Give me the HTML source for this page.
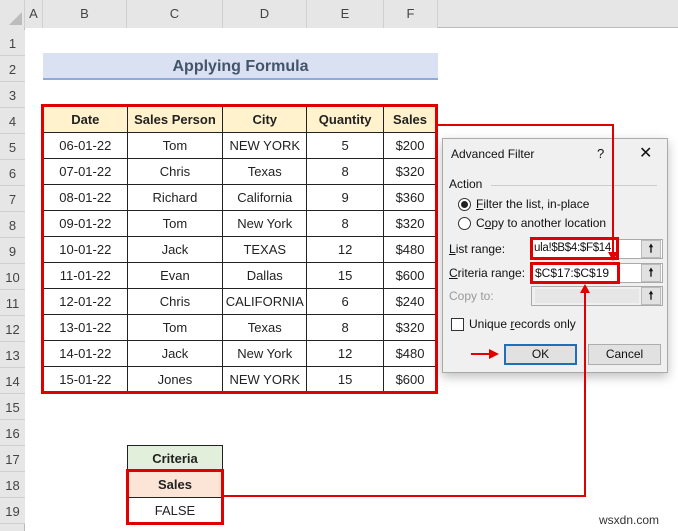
<!DOCTYPE html>
<html><head><style>
*{margin:0;padding:0;box-sizing:border-box}
body{width:678px;height:531px;background:#fff;position:relative;overflow:hidden;font-family:"Liberation Sans",sans-serif;font-size:13px;color:#222}
.a{position:absolute}
.ch{position:absolute;top:0;height:28px;line-height:28px;border-right:1px solid #cfcfcf;text-align:center;background:#e6e6e6;color:#444}
.rh{position:absolute;left:0;width:25px;height:26px;line-height:28px;text-align:center;border-bottom:1px solid #cfcfcf;background:#e6e6e6;color:#444;font-size:13px}
table{border-collapse:collapse;position:absolute}
td{border:1px solid #222;text-align:center;height:26px;padding:0;font-size:13px}
.red{position:absolute;border:3px solid #e00000}
.ln{position:absolute;background:#e00000}
.dlg{position:absolute;left:442px;top:138px;width:226px;height:235px;background:#f0f0f0;border:1px solid #aaa;box-shadow:0 4px 10px rgba(0,0,0,.25);font-size:12px;color:#111}
.inp{position:absolute;background:#fff;border:1px solid #aaa;height:20px}
.btn{position:absolute;width:20px;height:18px;background:#e1e1e1;border:1px solid #bbb;text-align:center;font-size:11px;line-height:16px;font-weight:bold}
</style></head><body>
<div class="a" style="left:0;top:0;width:678px;height:28px;background:#e6e6e6;border-bottom:1px solid #bbb"></div>
<div class="a" style="left:0;top:0;width:25px;height:28px;background:#e6e6e6;border-right:1px solid #cfcfcf"></div>
<div class="a" style="left:9px;top:12px;width:0;height:0;border-left:13px solid transparent;border-bottom:13px solid #bcbcbc"></div>
<div class="ch" style="left:25px;width:18px">A</div>
<div class="ch" style="left:43px;width:84px">B</div>
<div class="ch" style="left:127px;width:96px">C</div>
<div class="ch" style="left:223px;width:84px">D</div>
<div class="ch" style="left:307px;width:77px">E</div>
<div class="ch" style="left:384px;width:54px">F</div>
<div class="a" style="left:0;top:28px;width:25px;height:503px;background:#e6e6e6;border-right:1px solid #bbb"></div>
<div class="rh" style="top:30px">1</div><div class="rh" style="top:56px">2</div><div class="rh" style="top:82px">3</div><div class="rh" style="top:108px">4</div><div class="rh" style="top:134px">5</div><div class="rh" style="top:160px">6</div><div class="rh" style="top:186px">7</div><div class="rh" style="top:212px">8</div><div class="rh" style="top:238px">9</div><div class="rh" style="top:264px">10</div><div class="rh" style="top:290px">11</div><div class="rh" style="top:316px">12</div><div class="rh" style="top:342px">13</div><div class="rh" style="top:368px">14</div><div class="rh" style="top:394px">15</div><div class="rh" style="top:420px">16</div><div class="rh" style="top:446px">17</div><div class="rh" style="top:472px">18</div><div class="rh" style="top:498px">19</div>

<div class="a" style="left:43px;top:53px;width:395px;height:27px;background:#d9e1f2;border-bottom:2px solid #8ea9db;text-align:center;line-height:27px;font-weight:bold;font-size:16px;color:#44546a">Applying Formula</div>

<table style="left:43px;top:106px;width:394px">
<tr style="background:#fff2cc"><td style="width:84px;font-weight:bold">Date</td><td style="width:96px;font-weight:bold">Sales Person</td><td style="width:84px;font-weight:bold">City</td><td style="width:77px;font-weight:bold">Quantity</td><td style="width:53px;font-weight:bold">Sales</td></tr>
<tr><td>06-01-22</td><td>Tom</td><td>NEW YORK</td><td>5</td><td>$200</td></tr>
<tr><td>07-01-22</td><td>Chris</td><td>Texas</td><td>8</td><td>$320</td></tr>
<tr><td>08-01-22</td><td>Richard</td><td>California</td><td>9</td><td>$360</td></tr>
<tr><td>09-01-22</td><td>Tom</td><td>New York</td><td>8</td><td>$320</td></tr>
<tr><td>10-01-22</td><td>Jack</td><td>TEXAS</td><td>12</td><td>$480</td></tr>
<tr><td>11-01-22</td><td>Evan</td><td>Dallas</td><td>15</td><td>$600</td></tr>
<tr><td>12-01-22</td><td>Chris</td><td>CALIFORNIA</td><td>6</td><td>$240</td></tr>
<tr><td>13-01-22</td><td>Tom</td><td>Texas</td><td>8</td><td>$320</td></tr>
<tr><td>14-01-22</td><td>Jack</td><td>New York</td><td>12</td><td>$480</td></tr>
<tr><td>15-01-22</td><td>Jones</td><td>NEW YORK</td><td>15</td><td>$600</td></tr>
</table>
<div class="red" style="left:41px;top:104px;width:397px;height:290px"></div>

<table style="left:127px;top:445px;width:96px">
<tr><td style="background:#e2efda;font-weight:bold">Criteria</td></tr>
<tr><td style="background:#fce4d6;font-weight:bold">Sales</td></tr>
<tr><td>FALSE</td></tr>
</table>
<div class="red" style="left:126px;top:469px;width:98px;height:56px"></div>

<div class="dlg">
<div class="a" style="left:8px;top:8px;font-size:12px">Advanced Filter</div>
<div class="a" style="left:154px;top:7px;font-size:13px">?</div>
<div class="a" style="left:196px;top:4px;font-size:16px">✕</div>
<div class="a" style="left:6px;top:38px">Action</div>
<div class="a" style="left:48px;top:46px;width:166px;height:1px;background:#ccc"></div>
<div class="a" style="left:15px;top:59px;width:13px;height:13px;border:1px solid #333;border-radius:50%;background:#fff"></div>
<div class="a" style="left:18px;top:62px;width:7px;height:7px;border-radius:50%;background:#222"></div>
<div class="a" style="left:33px;top:58px"><u>F</u>ilter the list, in-place</div>
<div class="a" style="left:15px;top:78px;width:13px;height:13px;border:1px solid #333;border-radius:50%;background:#fff"></div>
<div class="a" style="left:33px;top:77px">C<u>o</u>py to another location</div>
<div class="a" style="left:6px;top:103px"><u>L</u>ist range:</div>
<div class="inp" style="left:88px;top:100px;width:132px"></div>
<div class="a" style="left:91px;top:103px;font-size:11.5px;letter-spacing:-0.3px">ula!$B$4:$F$14|</div>
<div class="btn" style="left:198px;top:101px">🠕</div>
<div class="a" style="left:6px;top:127px"><u>C</u>riteria range:</div>
<div class="inp" style="left:88px;top:124px;width:132px"></div>
<div class="a" style="left:92px;top:127px">$C$17:$C$19</div>
<div class="btn" style="left:198px;top:125px">🠕</div>
<div class="a" style="left:6px;top:150px;color:#999">Copy to:</div>
<div class="inp" style="left:88px;top:147px;width:132px;background:#f0f0f0"></div>
<div class="a" style="left:92px;top:150px;width:104px;height:14px;background:#e6e6e6"></div>
<div class="btn" style="left:198px;top:148px">🠕</div>
<div class="a" style="left:8px;top:179px;width:13px;height:13px;border:1px solid #333;background:#fff"></div>
<div class="a" style="left:26px;top:178px">Unique <u>r</u>ecords only</div>
<div class="a" style="left:61px;top:205px;width:73px;height:21px;border:2px solid #1e6fb8;background:#e1e1e1;text-align:center;line-height:17px">OK</div>
<div class="a" style="left:145px;top:205px;width:73px;height:21px;border:1px solid #adadad;background:#e1e1e1;text-align:center;line-height:19px">Cancel</div>
</div>

<!-- lines on top -->
<div class="ln" style="left:437px;top:124px;width:177px;height:2px"></div>
<div class="ln" style="left:612px;top:124px;width:2px;height:130px"></div>
<div class="a" style="left:608px;top:252px;border-left:5px solid transparent;border-right:5px solid transparent;border-top:9px solid #e00000"></div>
<div class="ln" style="left:223px;top:495px;width:363px;height:2px"></div>
<div class="ln" style="left:584px;top:290px;width:2px;height:207px"></div>
<div class="red" style="left:530px;top:237px;width:89px;height:23px"></div>
<div class="red" style="left:530px;top:262px;width:90px;height:22px"></div>
<div class="a" style="left:580px;top:284px;border-left:5px solid transparent;border-right:5px solid transparent;border-bottom:9px solid #e00000"></div>
<div class="ln" style="left:471px;top:353px;width:20px;height:2px"></div>
<div class="a" style="left:489px;top:349px;border-top:5px solid transparent;border-bottom:5px solid transparent;border-left:10px solid #e00000"></div>
<div class="a" style="left:599px;top:513px;font-size:12px;color:#333">wsxdn.com</div>
</body></html>
